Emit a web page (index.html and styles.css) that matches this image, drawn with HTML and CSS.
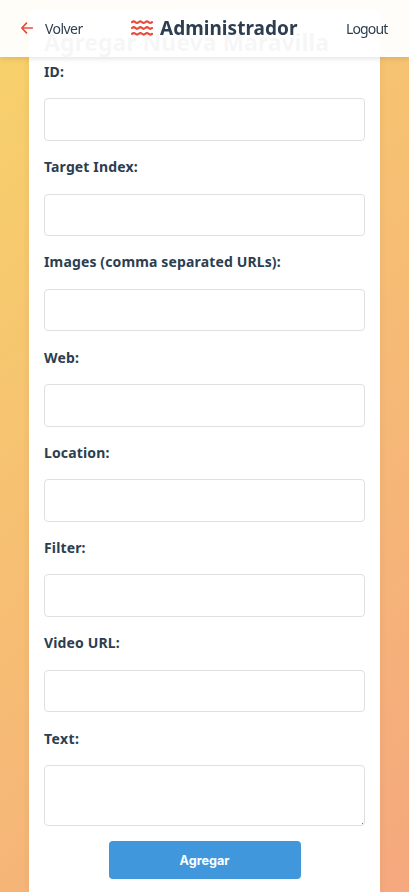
FILE: index.html
```html
<!DOCTYPE html>
<html lang="es">
<head>
<meta charset="utf-8">
<title>Administrador</title>
<link rel="stylesheet" href="styles.css">
</head>
<body>
<header class="topbar">
  <a class="back">
    <svg class="arrow" viewBox="0 0 12 12"><path d="M11.3 6H1M5.5 1.1L.8 6l4.7 4.9"/></svg>
    <span>Volver</span>
  </a>
  <div class="brand">
    <svg class="waves" viewBox="0 0 22 16"><path d="M1 2.2q1.8-1.5 3.4 0t3.3 0 3.3 0 3.3 0 3.3 0 3.4 0M1 8q1.8-1.5 3.4 0t3.3 0 3.3 0 3.3 0 3.3 0 3.4 0M1 13.8q1.8-1.5 3.4 0t3.3 0 3.3 0 3.3 0 3.3 0 3.4 0"/></svg>
    <span class="brand-name">Administrador</span>
  </div>
  <a class="logout">Logout</a>
</header>
<main class="card">
  <h2 class="title">Agregar Nueva Maravilla</h2>
  <form class="form">
    <div class="field"><label>ID:</label><input type="text"></div>
    <div class="field"><label>Target Index:</label><input type="text"></div>
    <div class="field"><label>Images (comma separated URLs):</label><input type="text"></div>
    <div class="field"><label>Web:</label><input type="text"></div>
    <div class="field"><label>Location:</label><input type="text"></div>
    <div class="field"><label>Filter:</label><input type="text"></div>
    <div class="field"><label>Video URL:</label><input type="text"></div>
    <div class="field last"><label>Text:</label><textarea></textarea></div>
    <button type="button" class="submit">Agregar</button>
  </form>
</main>
</body>
</html>
```
FILE: styles.css
```css
* { box-sizing: border-box; }
html { height: 892px; overflow: hidden; }
body {
  margin: 0;
  height: 892px;
  overflow: hidden;
  padding: 10px 29px 0;
  font-family: "Noto Sans", sans-serif;
  color: #2c3e50;
  background: linear-gradient(135deg, #f7d26a 0%, #f5a87e 100%);
}
.topbar {
  position: fixed;
  inset: 0 0 auto;
  z-index: 2;
  height: 57px;
  padding: 0 21px 1px;
  display: flex;
  align-items: center;
  background: rgba(255, 255, 255, .955);
  box-shadow: 0 2px 5px rgba(0, 0, 0, .1);
}
.back { display: flex; align-items: center; gap: 12px; font-size: 14px; width: 110px; letter-spacing: -.55px; }
.arrow { width: 12px; height: 12px; fill: none; stroke: #e74c3c; stroke-width: 1.7; stroke-linecap: round; stroke-linejoin: round; }
.brand { display: flex; align-items: center; gap: 7px; width: 215px; }
.waves { width: 22px; height: 16px; flex: none; fill: none; stroke: #e74c3c; stroke-width: 2.2; stroke-linecap: round; }
.brand-name { font-size: 19px; font-weight: 700; letter-spacing: .03px; }
.logout { font-size: 14px; letter-spacing: -.85px; }
.card {
  height: 882px;
  padding: 15px 15px 0;
  background: #fff;
  border-radius: 8px 8px 0 0;
  box-shadow: 0 0 8px rgba(0, 0, 0, .06);
}
.title { margin: 0; height: 37px; font-size: 23px; line-height: 34px; white-space: nowrap; }
.form { display: flex; flex-direction: column; }
.field { height: 95.23px; }
.field.last { height: 141px; }
label { display: block; height: 36.4px; line-height: 20px; font-size: 14px; font-weight: 700; letter-spacing: .14px; }
input, textarea {
  display: block;
  width: 321px;
  height: 42.5px;
  margin: 0;
  padding: 10px;
  border: 1px solid #e0e0e0;
  border-radius: 4px;
  background: #fff;
}
textarea {
  height: 61px;
  resize: none;
  background: linear-gradient(#777, #777) right 1px bottom 1px / 1px 1px no-repeat #fff;
}
.field.last label { letter-spacing: .4px; }
.submit {
  align-self: center;
  width: 192px;
  height: 38px;
  margin: -28.3px 0 0;
  border: 0;
  border-radius: 4px;
  background: #4197db;
  color: #fff;
  font: 700 12.6px Inter, sans-serif;
}
```
